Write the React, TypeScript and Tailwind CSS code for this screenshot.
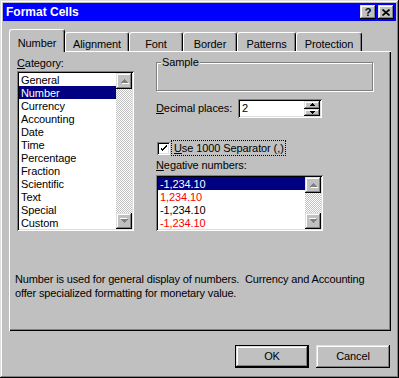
import React from 'react';

const raised =
  'bg-[#c0c0c0] shadow-[inset_-1px_-1px_0_#000,inset_1px_1px_0_#dfdfdf,inset_-2px_-2px_0_#808080,inset_2px_2px_0_#fff]';
const sunken =
  'shadow-[inset_1px_1px_0_#808080,inset_-1px_-1px_0_#fff,inset_2px_2px_0_#000,inset_-2px_-2px_0_#dfdfdf]';

const tabs = [
  { label: 'Number', w: 'w-[56px]', sel: true },
  { label: 'Alignment', w: 'w-[64px]' },
  { label: 'Font', w: 'w-[54px]' },
  { label: 'Border', w: 'w-[54px]' },
  { label: 'Patterns', w: 'w-[59px]' },
  { label: 'Protection', w: 'w-[66px]' },
];

const categories = [
  'General',
  'Number',
  'Currency',
  'Accounting',
  'Date',
  'Time',
  'Percentage',
  'Fraction',
  'Scientific',
  'Text',
  'Special',
  'Custom',
];

const negatives = [
  { text: '-1,234.10', red: false, sel: true },
  { text: '1,234.10', red: true },
  { text: '-1,234.10', red: false },
  { text: '-1,234.10', red: true },
];

function Arrow({ down = false }: { down?: boolean }) {
  // disabled (embossed) scroll arrow
  return (
    <svg width="9" height="6" viewBox="0 0 9 6" shapeRendering="crispEdges" className={down ? 'rotate-180' : ''}>
      <polygon points="4.5,1 8.5,5 0.5,5" fill="#fff" transform="translate(1 1)" />
      <polygon points="4.5,1 8.5,5 0.5,5" fill="#808080" />
    </svg>
  );
}

function ScrollBar() {
  return (
    <div className="w-[16px] flex flex-col">
      <div className={`${raised} w-[16px] h-[16px] flex items-center justify-center`}>
        <Arrow />
      </div>
      <div className="flex-1 bg-[repeating-conic-gradient(#c0c0c0_0%_25%,#ffffff_0%_50%)] bg-size-[2px_2px]" />
      <div className={`${raised} w-[16px] h-[16px] flex items-center justify-center`}>
        <Arrow down />
      </div>
    </div>
  );
}

function Spin({ down = false }: { down?: boolean }) {
  return (
    <div className={`${raised} flex-1 flex items-center justify-center`}>
      <svg width="5" height="3" viewBox="0 0 5 3" shapeRendering="crispEdges" className={down ? 'rotate-180' : ''}>
        <polygon points="2.5,0 5,3 0,3" fill="#000" />
      </svg>
    </div>
  );
}

export default function App() {
  return (
    <div
      className={`${raised} w-[399px] h-[378px] p-[3px] flex flex-col text-[11px] tracking-[-0.1px] text-black font-['Liberation_Sans',Arial,sans-serif] select-none`}
    >
      {/* Title bar */}
      <div className="h-[18px] bg-[#0000ff] flex items-center justify-between pl-[3px] pr-[2px]">
        <span className="text-white font-bold text-[12px] tracking-normal leading-[13px]">Format Cells</span>
        <div className="flex gap-[2px]">
          <div className={`${raised} w-[16px] h-[14px] flex items-center justify-center font-bold text-[11px] leading-none`}>
            ?
          </div>
          <div className={`${raised} w-[16px] h-[14px] flex items-center justify-center`}>
            <svg width="8" height="7" viewBox="0 0 8 7">
              <path d="M0.5 0.5 L7.5 6.5 M7.5 0.5 L0.5 6.5" stroke="#000" strokeWidth="1.6" />
            </svg>
          </div>
        </div>
      </div>

      {/* Tabs */}
      <div className="ml-[6px] mt-[8px] h-[22px] flex items-end">
        {tabs.map((t) => (
          <div
            key={t.label}
            className={`${t.w} ${
              t.sel ? 'h-[23px] -mb-px relative z-10 pt-[7px]' : 'h-[19px] pt-[5px]'
            } bg-[#c0c0c0] border-l border-t border-r border-white border-r-black rounded-t-[3px] shadow-[inset_-1px_0_0_#808080] text-center leading-[13px]`}
          >
            {t.label}
          </div>
        ))}
      </div>

      {/* Panel */}
      <div className="ml-[6px] w-[382px] h-[280px] bg-[#c0c0c0] shadow-[inset_1px_1px_0_#fff,inset_-1px_-1px_0_#000,inset_-2px_-2px_0_#808080] pt-[6px] flex flex-col">
        <div className="flex">
          {/* Category */}
          <div className="pl-[8px] flex flex-col">
            <div className="h-[13px] leading-[13px]">
              <span className="underline">C</span>ategory:
            </div>
            <div className={`${sunken} mt-px w-[117px] h-[160px] bg-white p-[2px] flex`}>
              <div className="flex-1 flex flex-col">
                {categories.map((c) => (
                  <div
                    key={c}
                    className={`h-[13px] leading-[14px] pl-[2px] ${
                      c === 'Number' ? 'bg-[#000080] text-white' : ''
                    }`}
                  >
                    {c}
                  </div>
                ))}
              </div>
              <ScrollBar />
            </div>
          </div>

          {/* Right side */}
          <div className="ml-[22px] w-[217px] flex flex-col">
            <div className="relative mt-[5px] h-[29px] border border-[#808080] shadow-[inset_1px_1px_0_#fff,1px_1px_0_#fff]">
              <span className="absolute -top-[7px] left-[4px] px-px bg-[#c0c0c0] leading-[13px]">Sample</span>
            </div>

            <div className="mt-[8px] h-[19px] flex items-center">
              <div className="w-[82px] leading-[13px]">
                <span className="underline">D</span>ecimal places:
              </div>
              <div className={`${sunken} w-[84px] h-[19px] bg-white p-[2px] flex`}>
                <div className="flex-1 pl-[2px] leading-[15px]">2</div>
                <div className="w-[16px] flex flex-col">
                  <Spin />
                  <Spin down />
                </div>
              </div>
            </div>

            <div className="mt-[22px] h-[16px] flex items-center">
              <div className={`${sunken} ml-px w-[13px] h-[13px] bg-white flex items-center justify-center`}>
                <svg width="7" height="7" viewBox="0 0 7 7" shapeRendering="crispEdges">
                  <path d="M0 2h1v3h1v1h1v-1h1v-1h1v-1h1v-1h1v-2h-1v1h-1v1h-1v1h-1v1h-1v-1h-1v-1z" fill="#000" />
                </svg>
              </div>
              <div className="ml-px h-[16px] border border-dotted border-black pl-[2px] pr-[1px] leading-[14px]">
                <span className="underline">U</span>se 1000 Separator (,)
              </div>
            </div>

            <div className="mt-[3px] h-[13px] leading-[13px]">
              <span className="underline">N</span>egative numbers:
            </div>
            <div className={`${sunken} mt-[3px] w-[167px] h-[56px] bg-white p-[2px] flex`}>
              <div className="flex-1 flex flex-col">
                {negatives.map((n, i) => (
                  <div
                    key={i}
                    className={`h-[13px] leading-[14px] pl-[2px] ${
                      n.sel ? 'bg-[#000080] text-white' : n.red ? 'text-[#ff0000]' : ''
                    }`}
                  >
                    {n.text}
                  </div>
                ))}
              </div>
              <ScrollBar />
            </div>
          </div>
        </div>

        <div className="mt-[41px] pl-[6px] leading-[14px] whitespace-pre tracking-[-0.15px]">
          {'Number is used for general display of numbers.  Currency and Accounting\noffer specialized formatting for monetary value.'}
        </div>
      </div>

      {/* Buttons */}
      <div className="ml-[6px] w-[382px] mt-[14px] pr-px flex justify-end gap-[7px]">
        <div className="w-[74px] h-[23px] border border-black">
          <div className={`${raised} w-full h-full flex items-center justify-center leading-[13px]`}>OK</div>
        </div>
        <div className={`${raised} w-[74px] h-[23px] flex items-center justify-center leading-[13px]`}>Cancel</div>
      </div>
    </div>
  );
}
